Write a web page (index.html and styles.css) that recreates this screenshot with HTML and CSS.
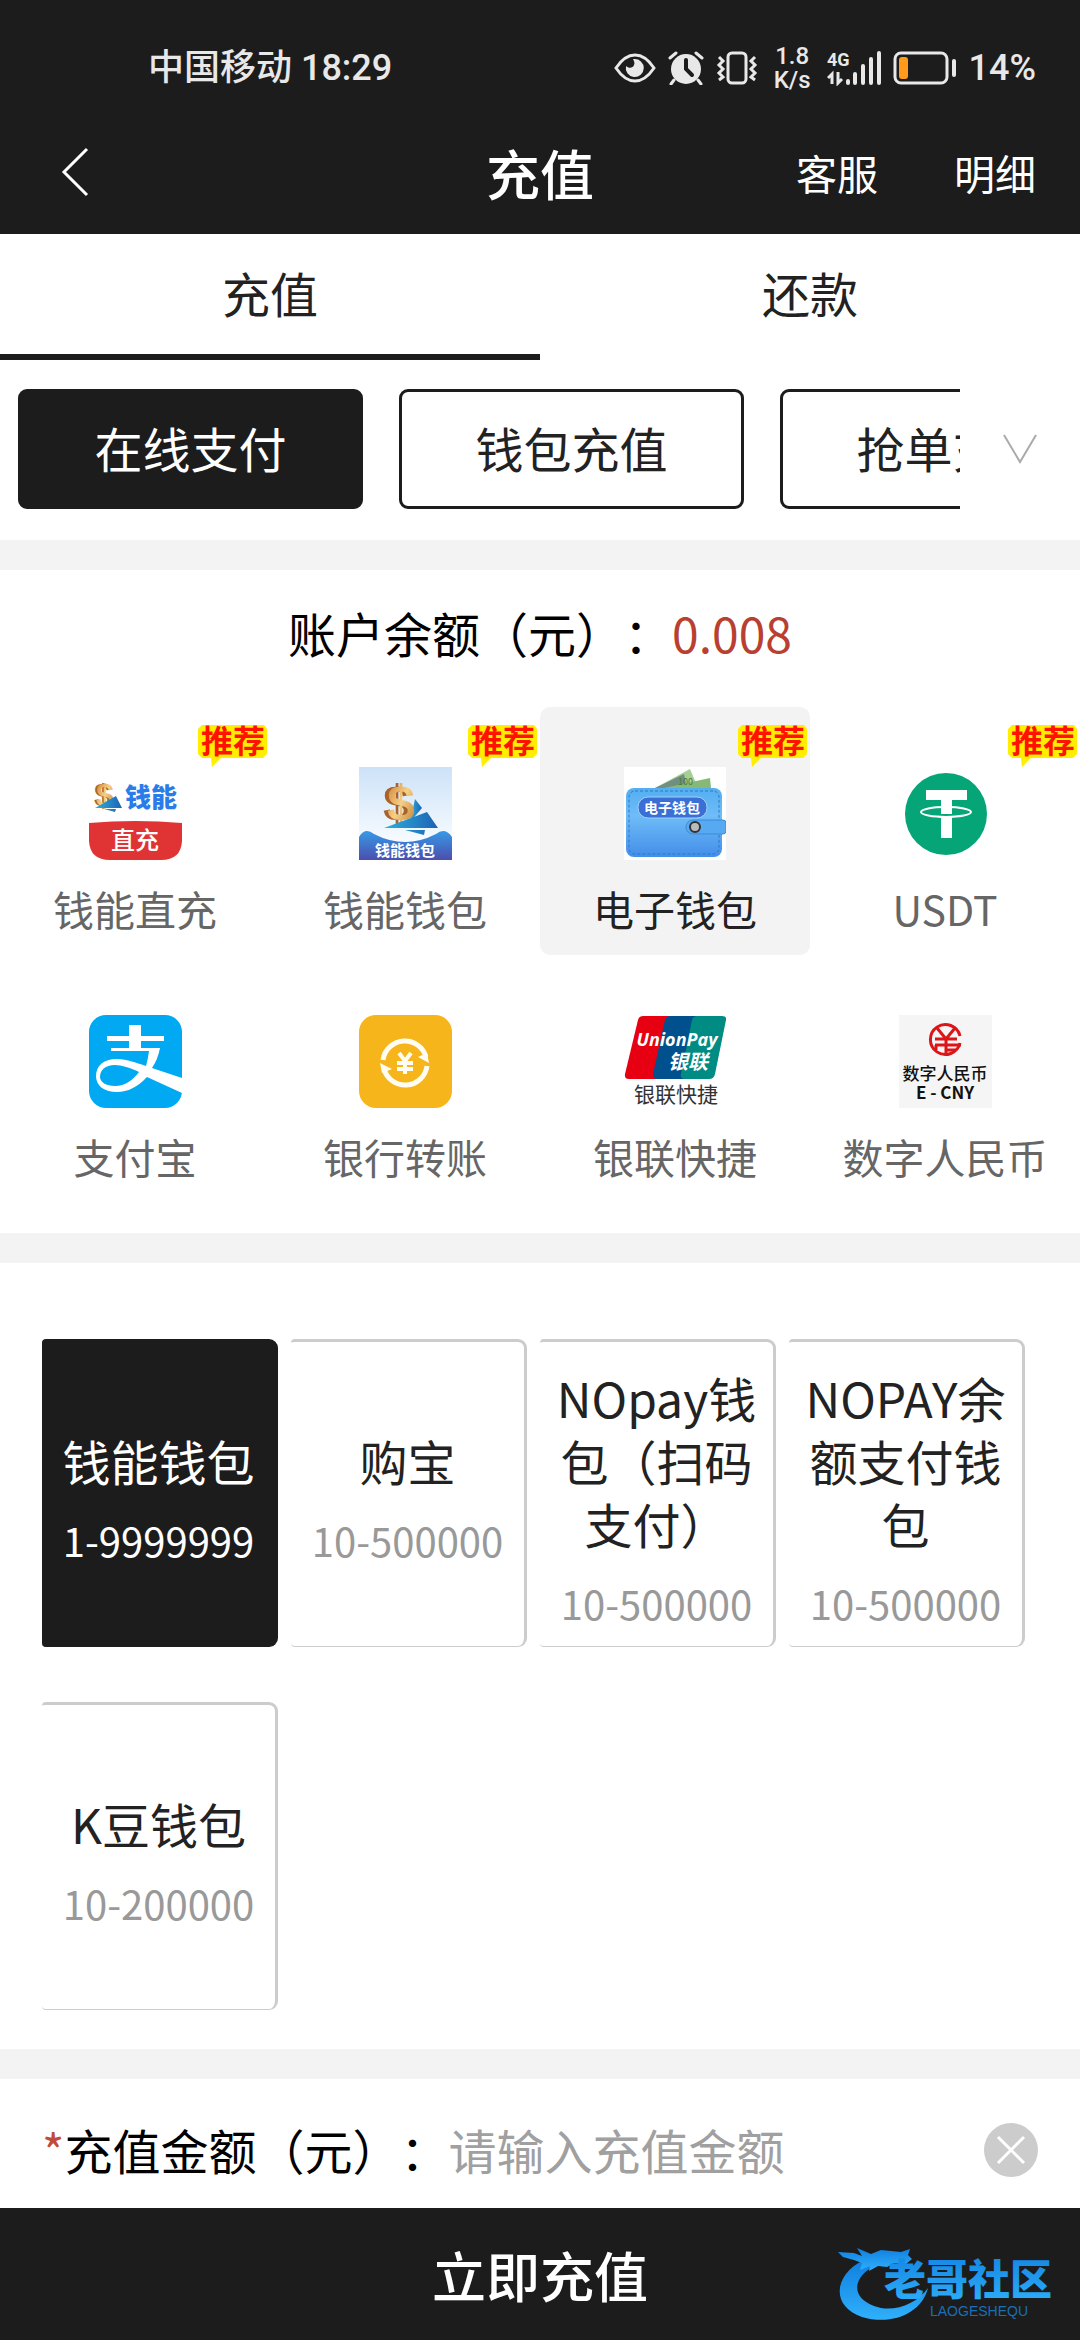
FILE: index.html
```html
<!DOCTYPE html>
<html lang="zh-CN">
<head>
    <meta charset="UTF-8">
    <meta name="viewport" content="width=device-width, initial-scale=1.0">
    <title>充值</title>
    <link rel="stylesheet" href="styles.css">
</head>
<body>
    <!-- shared gradients and the recommend badge -->
    <svg class="defs" width="0" height="0" aria-hidden="true">
        <defs>
            <linearGradient id="gold" x1="0" y1="0" x2="1" y2="1">
                <stop offset="0" stop-color="#c8772a"/>
                <stop offset="0.5" stop-color="#f6cf86"/>
                <stop offset="1" stop-color="#b9752c"/>
            </linearGradient>
            <linearGradient id="sail" x1="0" y1="0" x2="1" y2="0">
                <stop offset="0" stop-color="#2bb0dd"/>
                <stop offset="1" stop-color="#1d62b4"/>
            </linearGradient>
            <linearGradient id="sky" x1="0" y1="0" x2="0" y2="1">
                <stop offset="0" stop-color="#cde2f8"/>
                <stop offset="0.8" stop-color="#f6fbff"/>
            </linearGradient>
            <linearGradient id="wave" x1="0" y1="0" x2="0" y2="1">
                <stop offset="0" stop-color="#3799e6"/>
                <stop offset="1" stop-color="#4c4eae"/>
            </linearGradient>
            <linearGradient id="leather" x1="0" y1="0" x2="0" y2="1">
                <stop offset="0" stop-color="#52aef0"/>
                <stop offset="0.4" stop-color="#6fbcf8"/>
                <stop offset="1" stop-color="#438ee9"/>
            </linearGradient>
            <linearGradient id="dragon" x1="0" y1="0" x2="0" y2="1">
                <stop offset="0" stop-color="#0f7fe0"/>
                <stop offset="1" stop-color="#30b0fa"/>
            </linearGradient>
            <symbol id="badge" viewBox="0 0 70 43">
                <path d="M4 1h62l3 4v25l-4 4H23l-9 9-1-9H4l-4-4V5z" fill="#ffee00"/>
                <text class="badge-text" x="35" y="29" text-anchor="middle">推荐</text>
            </symbol>
        </defs>
    </svg>

    <header class="top">
        <div class="status">
            <span class="status-time">中国移动 18:29</span>
            <div class="status-icons">
                <svg width="42" height="30" viewBox="0 0 42 30">
                    <path d="M2 15C8 6 14 2 21 2s13 4 19 13c-6 9-12 13-19 13S8 24 2 15z" fill="none" stroke="#e8e8e8" stroke-width="3"/>
                    <path d="M20 6a9 9 0 1 1-8 7c3 3 7 2 8-1 1-2 0-4-1-6z" fill="#e8e8e8"/>
                </svg>
                <svg width="36" height="34" viewBox="0 0 36 34">
                    <circle cx="18" cy="18" r="15" fill="#e8e8e8"/>
                    <path d="M2 7l6-5M34 7l-6-5M6 29l-3 4M30 29l3 4" stroke="#e8e8e8" stroke-width="3" stroke-linecap="round"/>
                    <path d="M18 9v9l6 6" fill="none" stroke="#1c1c1c" stroke-width="4" stroke-linecap="round"/>
                </svg>
                <svg width="42" height="34" viewBox="0 0 42 34">
                    <rect x="12" y="2" width="18" height="30" rx="4" fill="none" stroke="#e8e8e8" stroke-width="3"/>
                    <path d="M3 6l4 4-4 4 4 4-4 4 4 4-4 3M39 6l-4 4 4 4-4 4 4 4-4 4 4 3" fill="none" stroke="#e8e8e8" stroke-width="3"/>
                </svg>
                <span class="status-speed"><span>1.8</span><span>K/s</span></span>
                <svg width="54" height="36" viewBox="0 0 54 36">
                    <text class="signal-text" x="0" y="16">4G</text>
                    <path d="M5 34V24l-4 4M11 22v11l4-4" fill="none" stroke="#e8e8e8" stroke-width="3"/>
                    <path d="M21 33v-2M28 33v-9M36 33V16M44 33V9M52 33V3" stroke="#e8e8e8" stroke-width="4" stroke-linecap="round"/>
                </svg>
                <svg width="64" height="34" viewBox="0 0 64 34">
                    <rect x="2" y="2" width="52" height="30" rx="6" fill="none" stroke="#e8e8e8" stroke-width="3"/>
                    <rect x="6" y="6" width="9" height="22" rx="3" fill="#ff9a1a"/>
                    <path d="M61 10v14" stroke="#e8e8e8" stroke-width="4" stroke-linecap="round"/>
                </svg>
                <span>14%</span>
            </div>
        </div>
        <div class="navbar">
            <button class="back" type="button" aria-label="返回">
                <svg width="28" height="50" viewBox="0 0 28 50"><path d="M26 2L3 25l23 23" fill="none" stroke="#fff" stroke-width="3"/></svg>
            </button>
            <h1 class="title">充值</h1>
            <nav class="links">
                <a href="#">客服</a>
                <a href="#">明细</a>
            </nav>
        </div>
    </header>

    <main>
        <section class="channels">
            <div class="tabs">
                <button class="tab active" type="button">充值</button>
                <button class="tab" type="button">还款</button>
            </div>
            <div class="modes">
                <div class="mode-list">
                    <button class="mode active" type="button">在线支付</button>
                    <button class="mode" type="button">钱包充值</button>
                    <button class="mode" type="button">抢单充值</button>
                </div>
                <button class="more" type="button" aria-label="展开">
                    <svg width="34" height="30" viewBox="0 0 34 30"><path d="M1 1l16 27L33 1" fill="none" stroke="#aaa" stroke-width="2"/></svg>
                </button>
            </div>
        </section>

        <section class="payments">
            <p class="balance">账户余额（元）：<span class="balance-value">0.008</span></p>
            <div class="pay-grid">
                <button class="pay" type="button">
                    <svg class="badge" width="70" height="43"><use href="#badge"/></svg>
                    <svg width="93" height="93" viewBox="0 0 93 93">
                        <text class="logo-dollar" x="5" y="39" font-size="32" fill="#a8642a">$</text>
                        <text class="logo-dollar" x="7" y="39" font-size="32" fill="url(#gold)">$</text>
                        <path d="M6 41l21-12 6 12zM15 42l11 3 1-3z" fill="url(#sail)"/>
                        <text class="logo-black" x="36" y="40" font-size="26" fill="#2a7de8">钱能</text>
                        <path d="M0 56Q46 52 93 56V74Q92 93 72 93H21Q1 93 0 74z" fill="#e03434"/>
                        <text class="logo-medium" x="46" y="82" font-size="24" fill="#fff" text-anchor="middle">直充</text>
                    </svg>
                    <span class="pay-name">钱能直充</span>
                </button>
                <button class="pay" type="button">
                    <svg class="badge" width="70" height="43"><use href="#badge"/></svg>
                    <svg width="93" height="93" viewBox="0 0 93 93">
                        <rect width="93" height="93" fill="url(#sky)"/>
                        <path d="M56 32l7 9-12 14z" fill="url(#sail)"/>
                        <text class="logo-dollar" x="24" y="53" font-size="50" fill="#a8622a">$</text>
                        <text class="logo-dollar" x="28" y="53" font-size="50" fill="url(#gold)">$</text>
                        <path d="M25 61l43-16 11 16zM46 63l19 5 1-5z" fill="url(#sail)"/>
                        <path d="M0 70Q6 60 15 67Q46 83 77 67Q86 60 93 70V93H0z" fill="url(#wave)"/>
                        <text class="logo-bold" x="46" y="89" font-size="15" fill="#fff" text-anchor="middle">钱能钱包</text>
                    </svg>
                    <span class="pay-name">钱能钱包</span>
                </button>
                <button class="pay active" type="button">
                    <svg class="badge" width="70" height="43"><use href="#badge"/></svg>
                    <svg width="102" height="93" viewBox="0 0 102 93">
                        <rect width="102" height="93" fill="#fff"/>
                        <path d="M31 21L66 2l8 19z" fill="#a5cf93"/>
                        <path d="M31 21L60 7l3 14z" fill="#6f8f80"/>
                        <path d="M40 21l46-10 1 10z" fill="#86b876"/>
                        <text x="54" y="18" font-size="9" fill="#4c7a3d">100</text>
                        <rect x="2" y="21" width="96" height="69" rx="8" fill="url(#leather)"/>
                        <rect x="5" y="24" width="90" height="63" rx="6" fill="none" stroke="#2f79c4" stroke-dasharray="3 2"/>
                        <rect x="14" y="30" width="69" height="21" rx="10" fill="#3a6fd6" stroke="#9fd0fa"/>
                        <text class="logo-bold" x="48" y="46" font-size="14" fill="#fff" text-anchor="middle">电子钱包</text>
                        <path d="M69 53h30q3 0 3 3v8q0 3-3 3H69a7 7 0 0 1 0-14z" fill="#57aaf2" stroke="#3d8ad8"/>
                        <circle cx="71" cy="60" r="5" fill="#bbb" stroke="#333" stroke-width="2"/>
                    </svg>
                    <span class="pay-name">电子钱包</span>
                </button>
                <button class="pay" type="button">
                    <svg class="badge" width="70" height="43"><use href="#badge"/></svg>
                    <svg width="93" height="93" viewBox="0 0 93 93">
                        <circle cx="47" cy="47" r="41" fill="#05a577"/>
                        <path d="M27 23h41v10H53v14H42V33H27zM42 50h11v21H42z" fill="#fff"/>
                        <ellipse cx="47" cy="45" rx="25" ry="5" fill="none" stroke="#fff" stroke-width="2"/>
                    </svg>
                    <span class="pay-name">USDT</span>
                </button>
                <button class="pay" type="button">
                    <svg width="93" height="93" viewBox="0 0 93 93">
                        <rect width="93" height="93" rx="17" fill="#00a9f2"/>
                        <path d="M40 10h12v11h23v5H52v7h19q-2 11-8 20l30 10v15L58 62q-14 15-30 15C14 77 7 70 7 61c0-10 7-17 21-17 10 0 20 4 29 7q2-7 3-15H22v-3h18v-7H18v-5h22z" fill="#fff"/>
                        <path d="M50 57c-8-4-18-7-24-7-10 0-15 5-15 12 0 5 6 9 15 9 10 0 18-6 24-14z" fill="#00a9f2"/>
                    </svg>
                    <span class="pay-name">支付宝</span>
                </button>
                <button class="pay" type="button">
                    <svg width="93" height="93" viewBox="0 0 93 93">
                        <rect width="93" height="93" rx="17" fill="#f7b51c"/>
                        <path d="M24 45a22 22 0 0 1 43-3M68 51a22 22 0 0 1-43 3" fill="none" stroke="#fffdf2" stroke-width="5"/>
                        <path d="M59 42l9-4 2 10zM33 54l-10 4-2-10z" fill="#fffdf2"/>
                        <path d="M40 38l6 8 6-8M46 46v13M38 48h16M38 54h16" fill="none" stroke="#fffdf2" stroke-width="4"/>
                    </svg>
                    <span class="pay-name">银行转账</span>
                </button>
                <button class="pay" type="button">
                    <svg width="102" height="93" viewBox="0 0 102 93">
                        <path d="M19 1h30L35 64H5q-5 0-4-5L14 5q1-4 5-4z" fill="#e60012"/>
                        <path d="M46 1h30L62 64H33q-4 0-4-5L41 5q1-4 5-4z" fill="#00508e"/>
                        <path d="M73 1h25q5 0 4 4L91 59q-1 5-6 5H61q-5 0-4-5L68 5q1-4 5-4z" fill="#008b83"/>
                        <text class="logo-latin" x="53" y="31" font-size="18" fill="#fff" text-anchor="middle">UnionPay</text>
                        <text class="logo-bold logo-italic" x="64" y="54" font-size="20" fill="#fff" text-anchor="middle">银联</text>
                        <text x="52" y="87" font-size="21" fill="#333" text-anchor="middle">银联快捷</text>
                    </svg>
                    <span class="pay-name">银联快捷</span>
                </button>
                <button class="pay" type="button">
                    <svg width="93" height="93" viewBox="0 0 93 93">
                        <rect width="93" height="93" fill="#f5f5f5"/>
                        <g fill="none" stroke="#dc1518" stroke-width="3">
                            <path d="M61 28a15 15 0 1 1 0-7"/>
                            <path d="M38 13l9 11 9-11M47 24v16M36 24h22M36 30h26M37 35v-5M57 35H47"/>
                        </g>
                        <text class="logo-medium" x="46" y="65" font-size="17" fill="#111" text-anchor="middle">数字人民币</text>
                        <text class="logo-bold" x="46" y="84" font-size="17" fill="#111" text-anchor="middle">E - CNY</text>
                    </svg>
                    <span class="pay-name">数字人民币</span>
                </button>
            </div>
        </section>

        <section class="wallets">
            <button class="wallet active" type="button">
                <span class="wallet-name">钱能钱包</span>
                <span class="wallet-range">1-9999999</span>
            </button>
            <button class="wallet" type="button">
                <span class="wallet-name">购宝</span>
                <span class="wallet-range">10-500000</span>
            </button>
            <button class="wallet" type="button">
                <span class="wallet-name">NOpay钱包（扫码支付）</span>
                <span class="wallet-range">10-500000</span>
            </button>
            <button class="wallet" type="button">
                <span class="wallet-name">NOPAY余额支付钱包</span>
                <span class="wallet-range">10-500000</span>
            </button>
            <button class="wallet" type="button">
                <span class="wallet-name">K豆钱包</span>
                <span class="wallet-range">10-200000</span>
            </button>
        </section>

        <form class="amount">
            <label for="amount"><span class="required">*</span>充值金额（元）：</label>
            <input id="amount" type="text" inputmode="decimal" placeholder="请输入充值金额">
            <button class="clear" type="button" aria-label="清除">
                <svg width="54" height="54" viewBox="0 0 54 54">
                    <circle cx="27" cy="27" r="27" fill="#ccc"/>
                    <path d="M14 14l26 26M40 14L14 40" stroke="#fff" stroke-width="3"/>
                </svg>
            </button>
        </form>
    </main>

    <footer class="bottom">
        <button class="submit" type="button">立即充值</button>
        <svg class="watermark" width="226" height="84" viewBox="0 0 226 84">
            <path d="M26 20C-4 34-8 66 24 77c30 9 60-4 66-29-12 17-36 25-54 18C12 57 14 36 40 24z" fill="url(#dragon)"/>
            <path d="M0 12l16 1 8 3-5-8 14 6 10-4 20 2 9-3-2 6 4 4-6 5-12-1-7 4-9-1-9 5 1-5-10 4 2-7-8-3-11-3z" fill="url(#dragon)"/>
            <text class="watermark-name" x="46" y="55" fill="url(#dragon)">老哥社区</text>
            <text class="watermark-sub" x="92" y="76" fill="#1b6fb4">LAOGESHEQU</text>
        </svg>
    </footer>
</body>
</html>
```

FILE: styles.css
```css
* {
    box-sizing: border-box;
}
body {
    margin: 0;
    padding-bottom: 132px;
    font-family: "Noto Sans CJK SC", sans-serif;
    font-size: 48px;
    line-height: 63px;
    text-spacing-trim: space-all;
    color: #222;
    background: #fff;
}
button {
    margin: 0;
    padding: 0;
    border: none;
    background: none;
    color: inherit;
    font: inherit;
    cursor: pointer;
}
svg {
    display: block;
    flex: none;
}
.defs {
    position: absolute;
}

/* status bar + title bar */
.top {
    background: #1c1c1c;
    color: #fff;
}
.status {
    display: flex;
    align-items: center;
    justify-content: space-between;
    height: 116px;
    padding: 20px 44px 0 148px;
    font-family: Roboto, "Noto Sans CJK SC", sans-serif;
    font-size: 36px;
    font-weight: 500;
    color: #e8e8e8;
}
.status-icons {
    display: flex;
    align-items: center;
    gap: 12px;
}
.status-speed {
    display: flex;
    flex-direction: column;
    margin: 0 4px;
    font-size: 24px;
    line-height: 24px;
    text-align: center;
}
.signal-text {
    font-size: 18px;
    font-weight: 700;
    fill: #e8e8e8;
}
.navbar {
    display: grid;
    grid-template-columns: 1fr auto 1fr;
    align-items: center;
    height: 118px;
    padding: 0 44px 6px;
}
.back {
    justify-self: start;
    padding-left: 17px;
}
.title {
    margin: 0;
    font-size: 54px;
    font-weight: 500;
}
.links {
    display: flex;
    justify-content: flex-end;
    gap: 76px;
    font-size: 41px;
}
.links a {
    color: #fff;
    text-decoration: none;
}

/* tabs */
.tabs {
    display: flex;
}
.tab {
    flex: 1;
    height: 126px;
    padding-bottom: 4px;
    border-bottom: 6px solid transparent;
}
.tab.active {
    border-bottom-color: #1c1c1c;
}
.modes {
    display: flex;
    align-items: center;
    padding: 29px 0 31px 18px;
    border-bottom: 30px solid #f3f3f3;
}
.mode-list {
    display: flex;
    flex: 1;
    gap: 36px;
    min-width: 0;
    overflow: hidden;
}
.mode {
    flex: none;
    width: 345px;
    height: 120px;
    padding-bottom: 4px;
    border: 3px solid #1c1c1c;
    border-radius: 9px;
}
.mode.active {
    background: #1c1c1c;
    color: #fff;
}
.more {
    display: flex;
    justify-content: center;
    width: 120px;
}

/* payment methods */
.payments {
    padding-bottom: 30px;
    border-bottom: 30px solid #f3f3f3;
}
.balance {
    margin: 0;
    padding: 31px 0 43px;
    text-align: center;
    color: #000;
}
.balance-value {
    color: #b94030;
}
.pay-grid {
    display: grid;
    grid-template-columns: repeat(4, 1fr);
}
.pay {
    position: relative;
    display: flex;
    flex-direction: column;
    align-items: center;
    gap: 24px;
    padding: 60px 0 23px;
    border-radius: 10px;
    font-size: 41px;
    line-height: 48px;
    color: #666;
}
.pay.active {
    background: #f3f3f3;
    color: #222;
}
.badge {
    position: absolute;
    top: 17px;
    right: 2px;
}
.badge-text {
    font-size: 32px;
    font-weight: 700;
    fill: #ff1200;
}
.logo-medium {
    font-weight: 500;
}
.logo-bold {
    font-weight: 700;
}
.logo-black {
    font-weight: 900;
}
.logo-italic {
    font-style: italic;
}
.logo-latin {
    font-family: "Open Sans", sans-serif;
    font-weight: 700;
    font-style: italic;
}
.logo-dollar {
    font-family: "Liberation Sans", sans-serif;
    font-weight: 700;
}

/* wallets */
.wallets {
    display: grid;
    grid-template-columns: repeat(4, 1fr);
    gap: 55px 13px;
    padding: 76px 55px 39px 42px;
    border-bottom: 30px solid #f3f3f3;
}
.wallet {
    display: flex;
    flex-direction: column;
    align-items: center;
    justify-content: center;
    gap: 17px;
    min-height: 308px;
    padding: 12px 12px 0;
    border: solid #ccc;
    border-width: 3px 3px 1px 0;
    border-radius: 4px 9px 9px 4px;
}
.wallet.active {
    border-color: #1c1c1c;
    background: #1c1c1c;
    color: #fff;
}
.wallet-range {
    font-size: 40px;
    color: #999;
}
.wallet.active .wallet-range {
    color: #fff;
}

/* amount */
.amount {
    display: flex;
    align-items: center;
    padding: 39px 42px 27px;
    color: #000;
}
.required {
    color: #c04a3c;
}
.amount input {
    flex: 1;
    min-width: 0;
    height: 63px;
    padding: 0;
    border: none;
    outline: none;
    background: none;
    font: inherit;
}
.amount input::placeholder {
    color: #a0a0a0;
}

.bottom {
    position: fixed;
    right: 0;
    bottom: 0;
    left: 0;
    background: #1c1c1c;
}
.submit {
    display: block;
    width: 100%;
    height: 132px;
    font-size: 54px;
    font-weight: 500;
    color: #fff;
}
.watermark {
    position: absolute;
    right: 16px;
    bottom: 16px;
    pointer-events: none;
}
.watermark-name {
    font-size: 42px;
    font-weight: 900;
}
.watermark-sub {
    font-family: "Liberation Sans", sans-serif;
    font-size: 14px;
}
```
